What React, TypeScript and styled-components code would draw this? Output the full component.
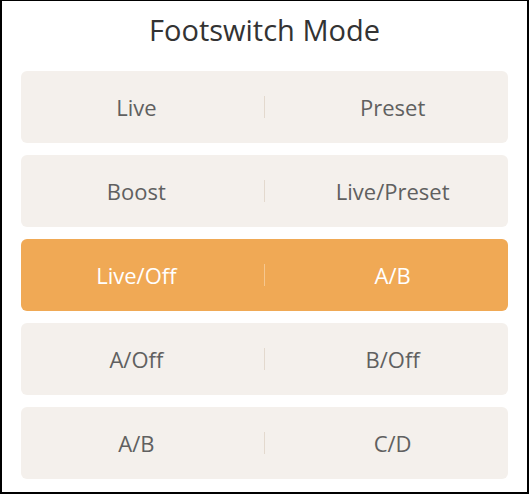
import styled, { createGlobalStyle } from 'styled-components';

const GlobalStyle = createGlobalStyle`
  html, body {
    margin: 0;
    padding: 0;
    background: #ffffff;
  }
  body {
    font-family: 'Open Sans', 'Noto Sans', sans-serif;
  }
`;

const Frame = styled.div`
  box-sizing: border-box;
  width: 529px;
  height: 494px;
  border-top: 1px solid #000;
  border-left: 2px solid #000;
  border-right: 2px solid #000;
  border-bottom: 2px solid #000;
  padding: 9px 19px 0 19px;
  background: #fff;
`;

const Title = styled.h1`
  margin: 0 0 21px;
  font-size: 29px;
  line-height: 40px;
  font-weight: 400;
  color: #333333;
  text-align: center;
`;

const ModeList = styled.div`
  display: flex;
  flex-direction: column;
  gap: 12px;
`;

const ModeRow = styled.div<{ $active?: boolean }>`
  display: grid;
  grid-template-columns: 1fr 1.5px 1fr;
  column-gap: 12px;
  align-items: center;
  height: 72px;
  border-radius: 6px;
  background: ${(p) => (p.$active ? '#f0a955' : '#f4f0ec')};
  color: ${(p) => (p.$active ? '#ffffff' : '#606060')};
  cursor: pointer;
`;

const ModeLabel = styled.span`
  text-align: center;
  font-size: 22px;
  line-height: 30px;
`;

const Divider = styled.span<{ $active?: boolean }>`
  height: 22px;
  background: ${(p) => (p.$active ? '#f6c78e' : '#e3d9ce')};
`;

const modes: [string, string][] = [
  ['Live', 'Preset'],
  ['Boost', 'Live/Preset'],
  ['Live/Off', 'A/B'],
  ['A/Off', 'B/Off'],
  ['A/B', 'C/D'],
];

export default function App() {
  const activeIndex = 2;
  return (
    <>
      <GlobalStyle />
      <Frame>
        <Title>Footswitch Mode</Title>
        <ModeList>
          {modes.map(([left, right], i) => (
            <ModeRow key={left + right} $active={i === activeIndex}>
              <ModeLabel>{left}</ModeLabel>
              <Divider $active={i === activeIndex} />
              <ModeLabel>{right}</ModeLabel>
            </ModeRow>
          ))}
        </ModeList>
      </Frame>
    </>
  );
}
